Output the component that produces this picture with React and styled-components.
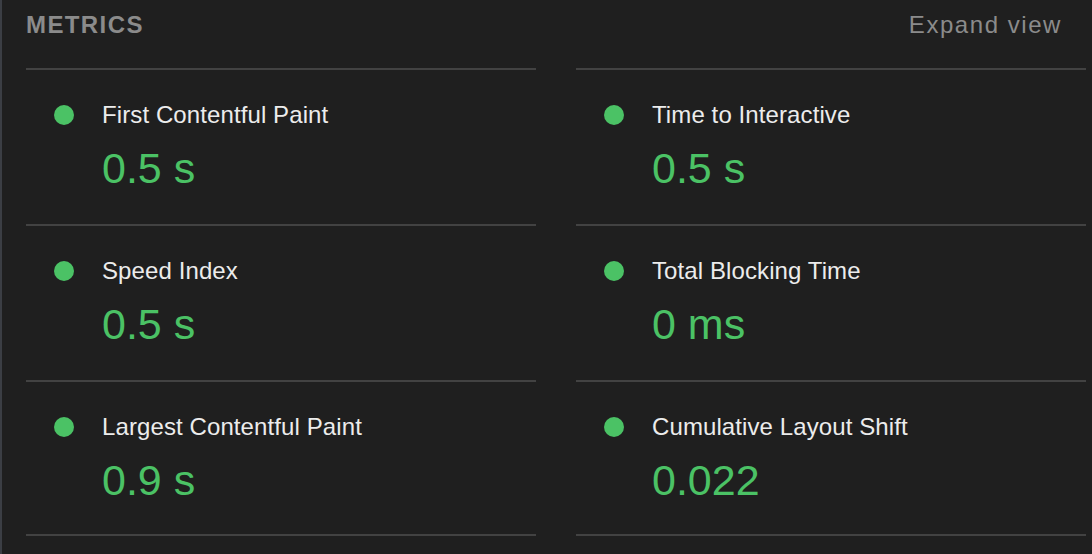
import styled, { createGlobalStyle } from "styled-components";

const GlobalStyle = createGlobalStyle`
  html, body {
    margin: 0;
    padding: 0;
    background: #1f1f1f;
  }
  body {
    font-family: "Liberation Sans", Arial, Helvetica, sans-serif;
  }
`;

const Panel = styled.section`
  min-height: 100vh;
  box-sizing: border-box;
  background: #1f1f1f;
  border-left: 2px solid #3b3e44;
  padding: 0 6px 0 24px;
`;

const Header = styled.header`
  display: flex;
  justify-content: space-between;
  align-items: flex-start;
  height: 68px;
  box-sizing: border-box;
  padding: 11px 24px 0 0;
  font-size: 24px;
  line-height: 28px;
  color: #8b8b8b;
`;

const Title = styled.h2`
  margin: 0;
  font-size: 24px;
  line-height: 28px;
  font-weight: 700;
  letter-spacing: 1.4px;
  text-transform: uppercase;
`;

const ExpandLink = styled.span`
  letter-spacing: 1.55px;
  cursor: pointer;
`;

const Grid = styled.div`
  display: grid;
  grid-template-columns: 510px 510px;
  column-gap: 40px;
`;

const Metric = styled.div`
  display: grid;
  grid-template-columns: 20px 1fr;
  column-gap: 28px;
  align-items: center;
  border-top: 2px solid #424242;
  border-bottom: ${(p) => (p.last ? "2px solid #424242" : "none")};
  padding: 31px 0 ${(p) => (p.last ? "30px" : "32px")} 28px;
`;

const Dot = styled.span`
  width: 20px;
  height: 20px;
  border-radius: 50%;
  background: ${(p) => p.color};
`;

const Label = styled.div`
  font-size: 24px;
  line-height: 28px;
  letter-spacing: 0.1px;
  color: #ececec;
`;

const Value = styled.div`
  grid-column: 2;
  margin-top: 15px;
  font-size: 43px;
  line-height: 48px;
  color: ${(p) => p.color};
`;

const GREEN = "#4bc265";

const metrics = [
  { label: "First Contentful Paint", value: "0.5 s" },
  { label: "Time to Interactive", value: "0.5 s" },
  { label: "Speed Index", value: "0.5 s" },
  { label: "Total Blocking Time", value: "0 ms" },
  { label: "Largest Contentful Paint", value: "0.9 s" },
  { label: "Cumulative Layout Shift", value: "0.022" },
];

export default function App() {
  return (
    <>
      <GlobalStyle />
      <Panel>
        <Header>
          <Title>Metrics</Title>
          <ExpandLink>Expand view</ExpandLink>
        </Header>
        <Grid>
          {metrics.map((m, i) => (
            <Metric key={m.label} last={i >= metrics.length - 2}>
              <Dot color={GREEN} />
              <Label>{m.label}</Label>
              <Value color={GREEN}>{m.value}</Value>
            </Metric>
          ))}
        </Grid>
      </Panel>
    </>
  );
}
